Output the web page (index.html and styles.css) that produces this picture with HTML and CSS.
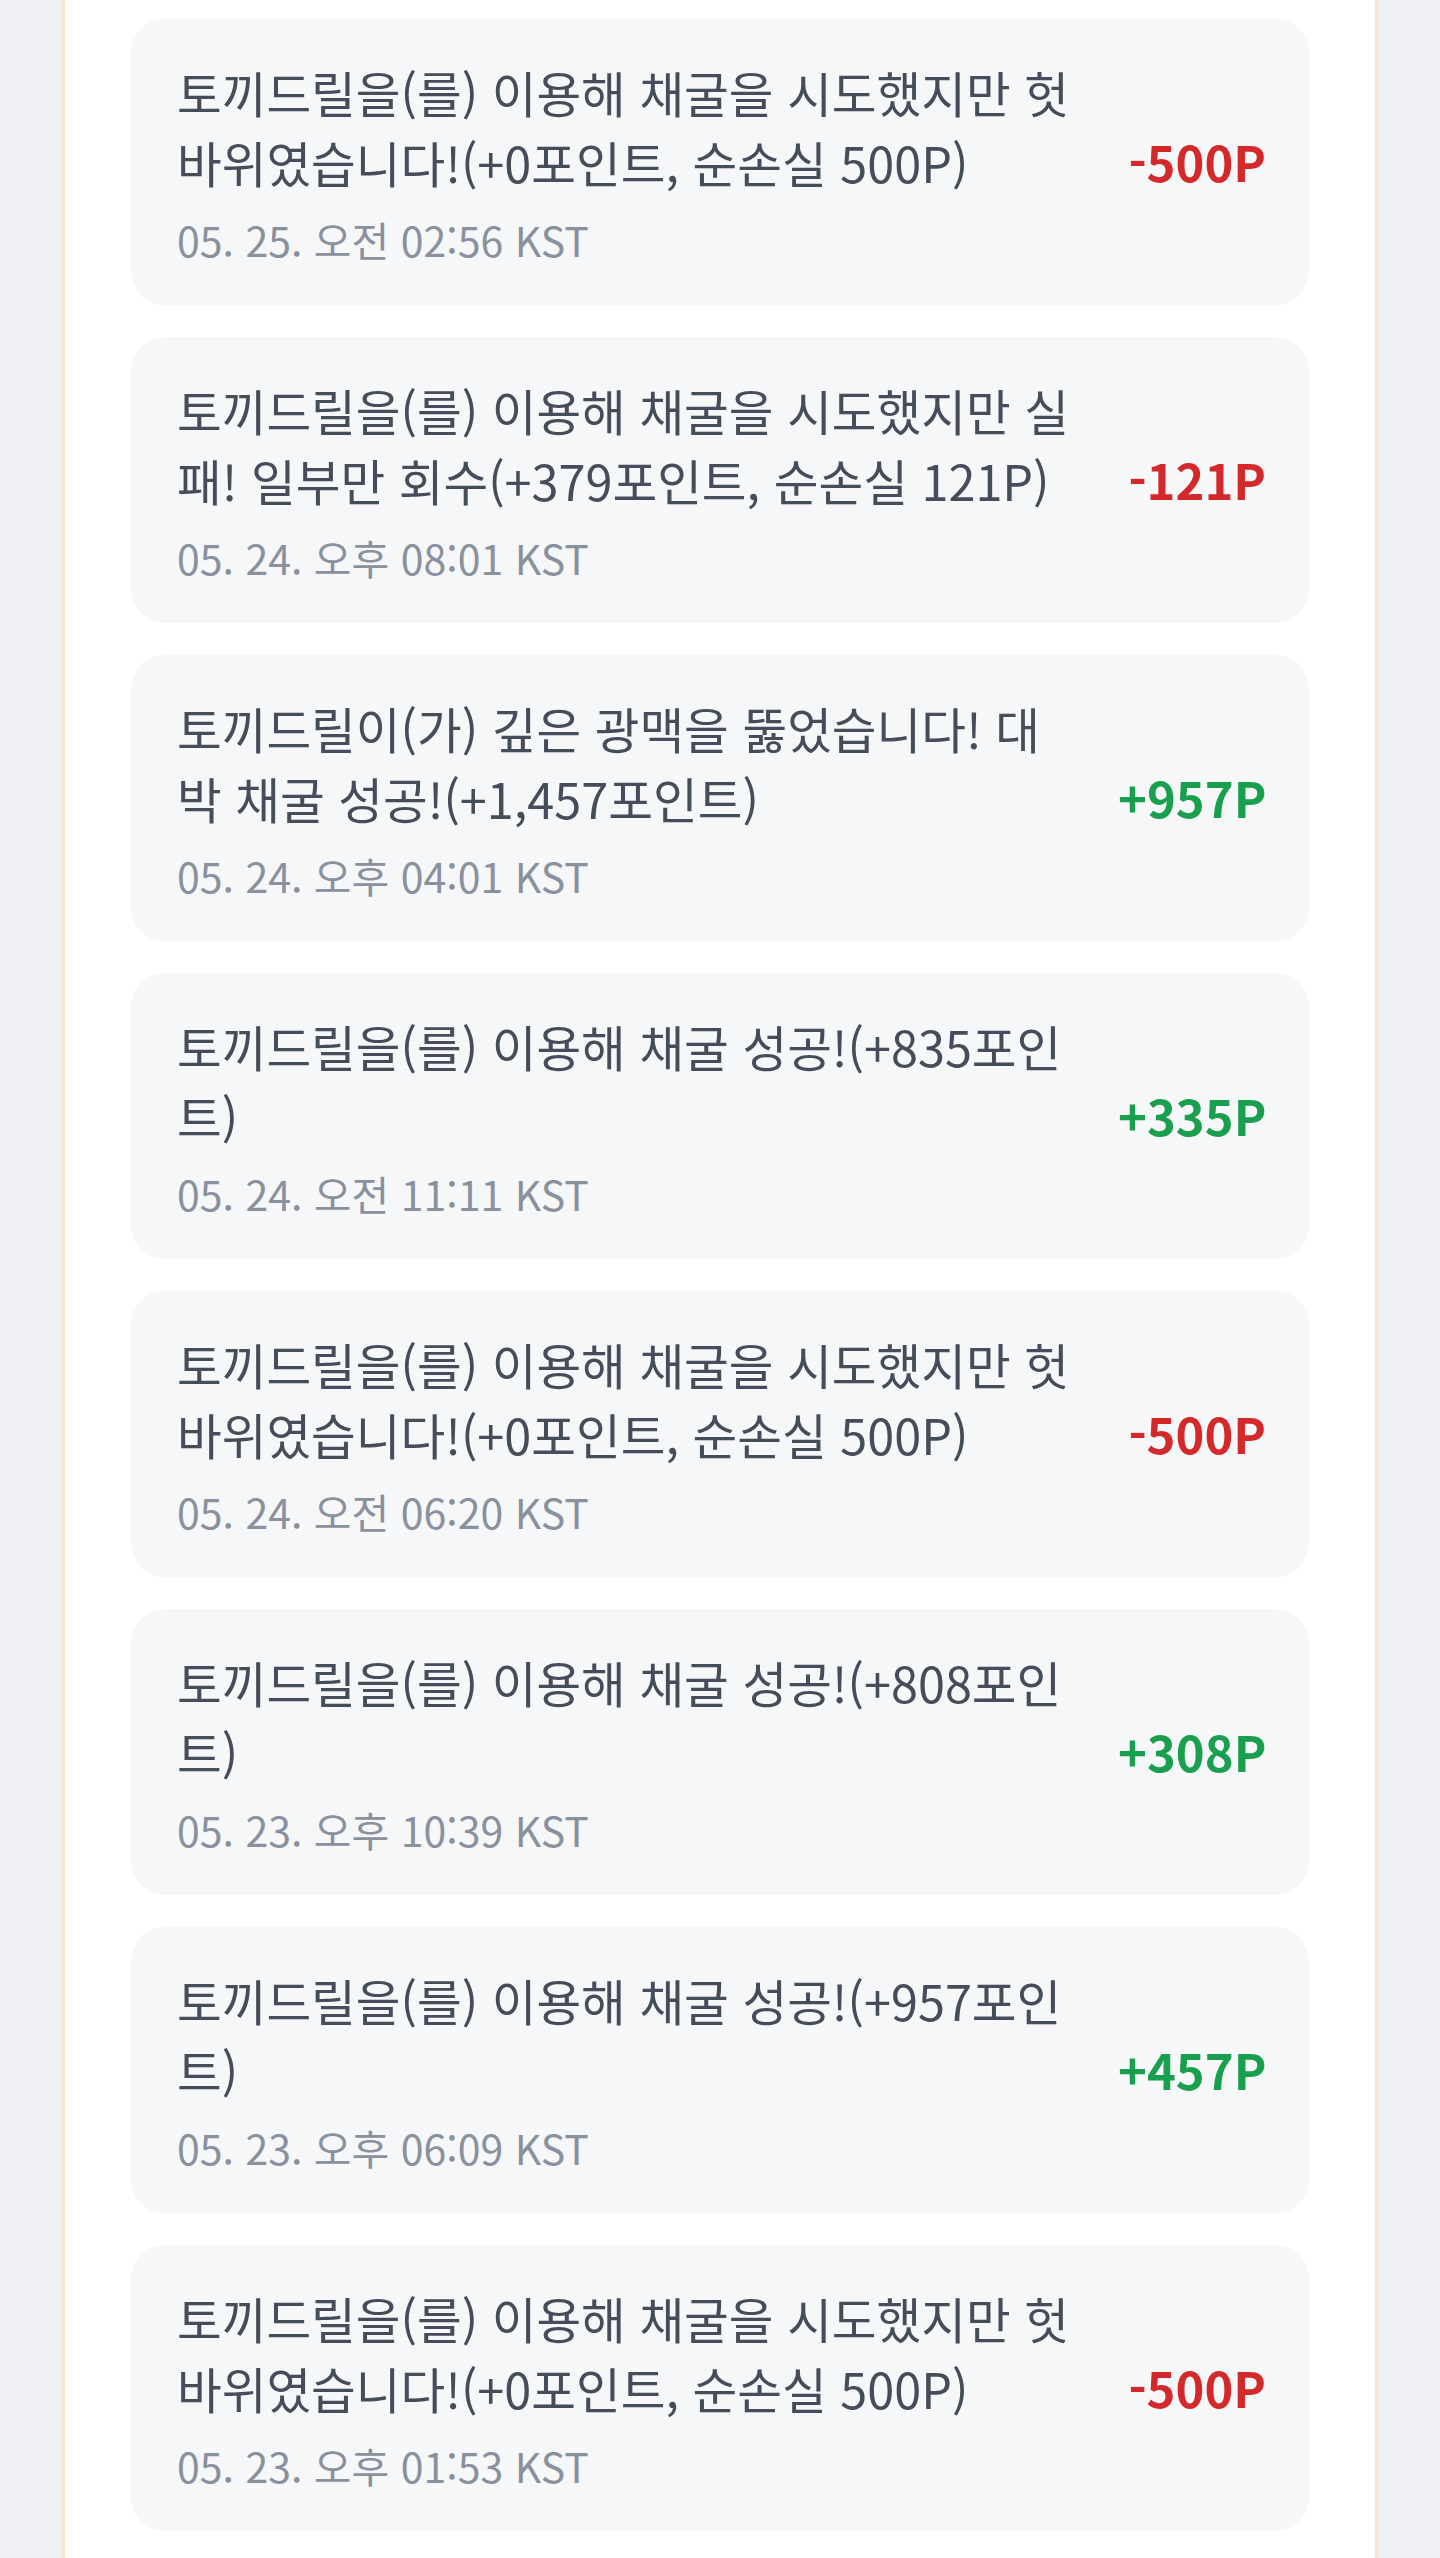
FILE: index.html
```html
<!DOCTYPE html>
<html lang="ko">
<head>
<meta charset="utf-8">
<title>채굴 기록</title>
<link rel="stylesheet" href="styles.css">
</head>
<body>
<div class="panel">
  <ul class="log">
    <li class="item">
      <div class="info">
        <p class="msg">토끼드릴을(를) 이용해 채굴을 시도했지만 헛바위였습니다!(+0포인트, 순손실 500P)</p>
        <p class="time">05. 25. 오전 02:56 KST</p>
      </div>
      <span class="amount minus">-500P</span>
    </li>
    <li class="item">
      <div class="info">
        <p class="msg">토끼드릴을(를) 이용해 채굴을 시도했지만 실패! 일부만 회수(+379포인트, 순손실 121P)</p>
        <p class="time">05. 24. 오후 08:01 KST</p>
      </div>
      <span class="amount minus">-121P</span>
    </li>
    <li class="item">
      <div class="info">
        <p class="msg">토끼드릴이(가) 깊은 광맥을 뚫었습니다! 대박 채굴 성공!(+1,457포인트)</p>
        <p class="time">05. 24. 오후 04:01 KST</p>
      </div>
      <span class="amount plus">+957P</span>
    </li>
    <li class="item">
      <div class="info">
        <p class="msg">토끼드릴을(를) 이용해 채굴 성공!(+835포인트)</p>
        <p class="time">05. 24. 오전 11:11 KST</p>
      </div>
      <span class="amount plus">+335P</span>
    </li>
    <li class="item">
      <div class="info">
        <p class="msg">토끼드릴을(를) 이용해 채굴을 시도했지만 헛바위였습니다!(+0포인트, 순손실 500P)</p>
        <p class="time">05. 24. 오전 06:20 KST</p>
      </div>
      <span class="amount minus">-500P</span>
    </li>
    <li class="item">
      <div class="info">
        <p class="msg">토끼드릴을(를) 이용해 채굴 성공!(+808포인트)</p>
        <p class="time">05. 23. 오후 10:39 KST</p>
      </div>
      <span class="amount plus">+308P</span>
    </li>
    <li class="item">
      <div class="info">
        <p class="msg">토끼드릴을(를) 이용해 채굴 성공!(+957포인트)</p>
        <p class="time">05. 23. 오후 06:09 KST</p>
      </div>
      <span class="amount plus">+457P</span>
    </li>
    <li class="item">
      <div class="info">
        <p class="msg">토끼드릴을(를) 이용해 채굴을 시도했지만 헛바위였습니다!(+0포인트, 순손실 500P)</p>
        <p class="time">05. 23. 오후 01:53 KST</p>
      </div>
      <span class="amount minus">-500P</span>
    </li>
  </ul>
</div>
</body>
</html>
```

FILE: styles.css
```css
html, body {
  margin: 0;
  padding: 0;
}
body {
  background: #eff1f4;
  font-family: "Noto Sans CJK KR", "Noto Sans", sans-serif;
  min-height: 2558px;
}
.panel {
  margin: 0 62px;
  min-height: 2558px;
  background: #ffffff;
  border-left: 3px solid #f6e8c8;
  border-right: 3px solid #f6e8c8;
  padding: 19px 66px 0;
  box-sizing: border-box;
}
.log {
  list-style: none;
  margin: 0;
  padding: 0;
  display: flex;
  flex-direction: column;
  gap: 32px;
}
.item {
  display: flex;
  align-items: center;
  gap: 38px;
  background: #f6f7f9;
  border-radius: 34px;
  padding: 38px 43px 36px 46px;
}
.info {
  flex: 1;
  min-width: 0;
}
.msg {
  margin: 0;
  font-size: 48.6px;
  line-height: 70px;
  color: #454d5a;
}
.time {
  margin: 12px 0 0;
  font-size: 41px;
  line-height: 60px;
  color: #8a919e;
}
.amount {
  flex: none;
  width: 148px;
  padding-bottom: 6px;
  text-align: right;
  font-size: 49px;
  font-weight: 700;
}
.minus { color: #d3292b; }
.plus { color: #1a9f4f; }
```
